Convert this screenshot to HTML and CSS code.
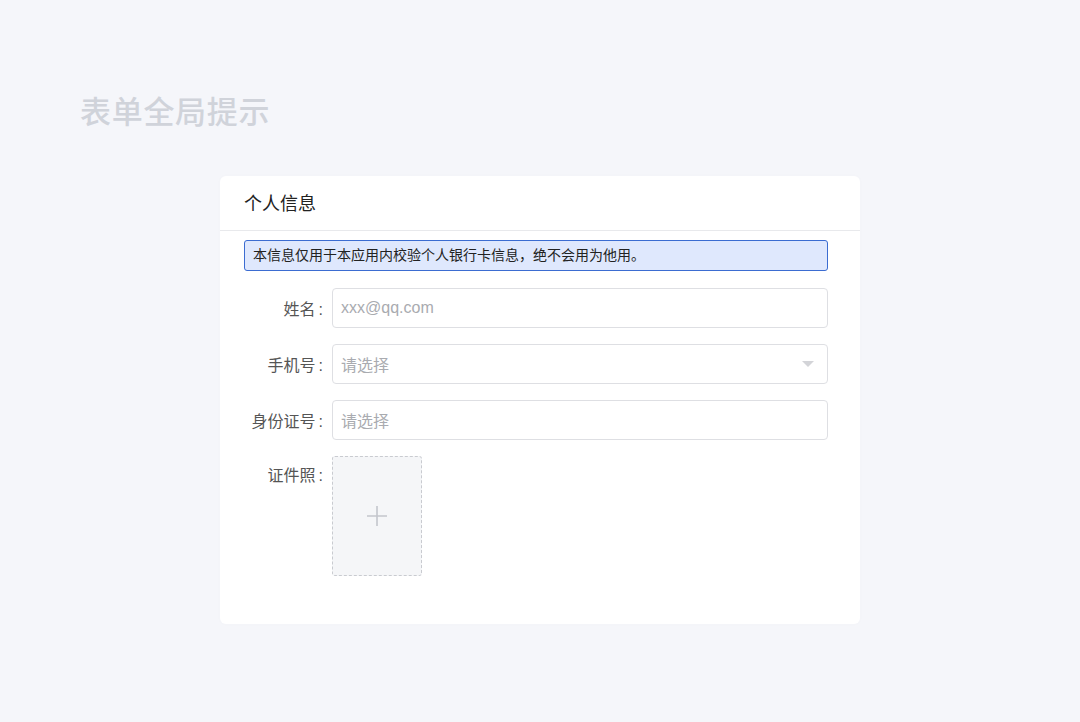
FILE: index.html
```html
<!DOCTYPE html>
<html lang="zh-CN">
<head>
<meta charset="utf-8">
<link rel="stylesheet" href="styles.css">
</head>
<body>
<div class="page">
  <h1 class="page-title">表单全局提示</h1>
  <div class="card">
    <div class="card-header">个人信息</div>
    <div class="card-body">
      <div class="alert">本信息仅用于本应用内校验个人银行卡信息，绝不会用为他用。</div>
      <div class="form">
        <div class="form-row">
          <label class="form-label">姓名<span class="colon">:</span></label>
          <div class="input"><span class="placeholder">xxx@qq.com</span></div>
        </div>
        <div class="form-row">
          <label class="form-label">手机号<span class="colon">:</span></label>
          <div class="input select"><span class="placeholder">请选择</span><span class="caret"></span></div>
        </div>
        <div class="form-row">
          <label class="form-label">身份证号<span class="colon">:</span></label>
          <div class="input"><span class="placeholder">请选择</span></div>
        </div>
        <div class="form-row form-row-top">
          <label class="form-label">证件照<span class="colon">:</span></label>
          <div class="upload">
            <svg width="22" height="22" viewBox="0 0 22 22"><path d="M11 1V21M1 11H21" stroke="#c4c6cc" stroke-width="1.6" fill="none"/></svg>
          </div>
        </div>
      </div>
    </div>
  </div>
</div>
</body>
</html>
```

FILE: styles.css
```css
* { box-sizing: border-box; }
html, body {
  margin: 0;
  padding: 0;
  background: #f5f6fa;
  font-family: "Liberation Sans", "Noto Sans CJK SC", sans-serif;
}
.page {
  width: 1080px;
  height: 722px;
  padding: 92px 0 0 80px;
}
.page-title {
  margin: 0;
  font-size: 31px;
  line-height: 42px;
  font-weight: 500;
  color: #d0d3da;
  letter-spacing: 0.7px;
}
.card {
  margin: 42px 0 0 140px;
  width: 640px;
  height: 448px;
  background: #fff;
  border-radius: 6px;
  box-shadow: 0 0 6px rgba(0, 0, 0, 0.015);
}
.card-header {
  height: 55px;
  padding-left: 24px;
  line-height: 56px;
  font-size: 18px;
  color: #222;
  border-bottom: 1px solid #e8e9ec;
}
.card-body {
  padding: 9px 32px 0 24px;
}
.alert {
  height: 31px;
  line-height: 29px;
  padding-left: 8px;
  font-size: 14px;
  color: #222;
  background: #dfe8fd;
  border: 1px solid #3b6cd1;
  border-radius: 3px;
}
.form {
  margin-top: 17px;
  display: flex;
  flex-direction: column;
  gap: 16px;
}
.form-row {
  display: flex;
  align-items: center;
}
.form-row-top {
  align-items: flex-start;
}
.form-row-top .form-label {
  line-height: 40px;
}
.form-label {
  width: 81px;
  padding-right: 2px;
  text-align: right;
  font-size: 16px;
  color: #555;
  margin-right: 7px;
  flex-shrink: 0;
}
.colon {
  margin-left: 3px;
}
.input {
  flex: 1;
  height: 40px;
  border: 1px solid #dedfe3;
  border-radius: 4px;
  display: flex;
  align-items: center;
  padding-left: 8px;
  padding-right: 12px;
  font-size: 16px;
}
.placeholder {
  color: #a9abb0;
}
.select {
  justify-content: space-between;
}
.caret {
  width: 0;
  height: 0;
  border-left: 6px solid transparent;
  border-right: 6px solid transparent;
  border-top: 6px solid #d3d4d8;
  margin-right: 1px;
}
.upload {
  width: 90px;
  height: 120px;
  background: #f5f6f8;
  border: 1px dashed #c9cbd0;
  border-radius: 3px;
  display: flex;
  align-items: center;
  justify-content: center;
}
```
